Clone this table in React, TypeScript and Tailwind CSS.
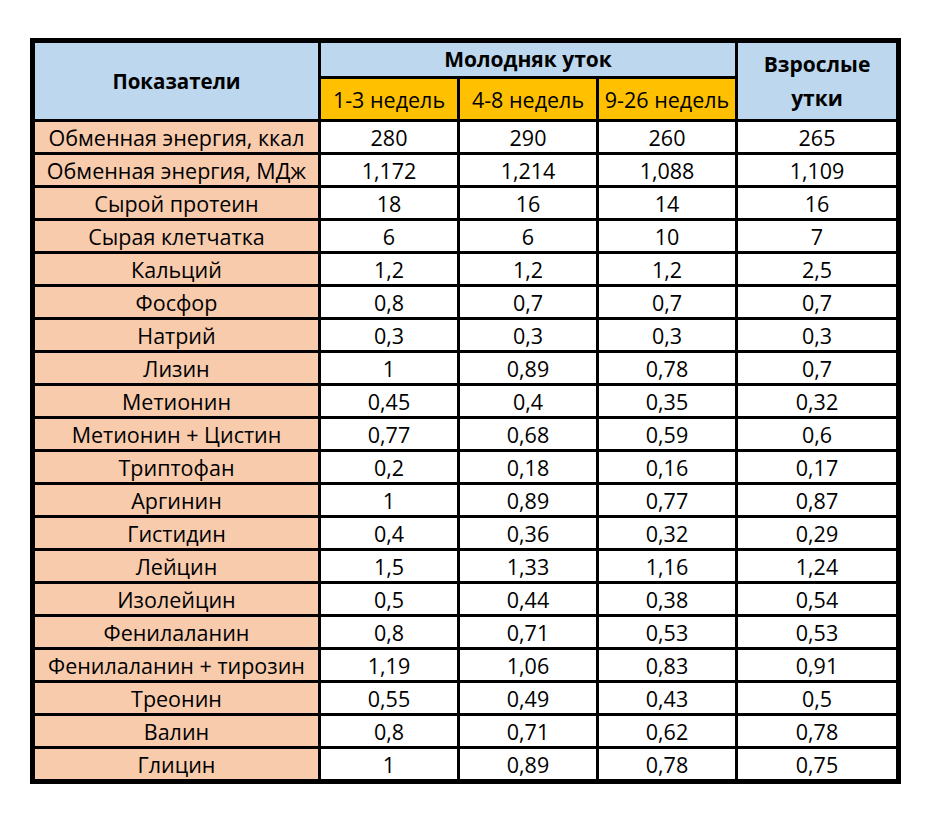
const ROWS: [string, string, string, string, string][] = [
  ['Обменная энергия, ккал', '280', '290', '260', '265'],
  ['Обменная энергия, МДж', '1,172', '1,214', '1,088', '1,109'],
  ['Сырой протеин', '18', '16', '14', '16'],
  ['Сырая клетчатка', '6', '6', '10', '7'],
  ['Кальций', '1,2', '1,2', '1,2', '2,5'],
  ['Фосфор', '0,8', '0,7', '0,7', '0,7'],
  ['Натрий', '0,3', '0,3', '0,3', '0,3'],
  ['Лизин', '1', '0,89', '0,78', '0,7'],
  ['Метионин', '0,45', '0,4', '0,35', '0,32'],
  ['Метионин + Цистин', '0,77', '0,68', '0,59', '0,6'],
  ['Триптофан', '0,2', '0,18', '0,16', '0,17'],
  ['Аргинин', '1', '0,89', '0,77', '0,87'],
  ['Гистидин', '0,4', '0,36', '0,32', '0,29'],
  ['Лейцин', '1,5', '1,33', '1,16', '1,24'],
  ['Изолейцин', '0,5', '0,44', '0,38', '0,54'],
  ['Фенилаланин', '0,8', '0,71', '0,53', '0,53'],
  ['Фенилаланин + тирозин', '1,19', '1,06', '0,83', '0,91'],
  ['Треонин', '0,55', '0,49', '0,43', '0,5'],
  ['Валин', '0,8', '0,71', '0,62', '0,78'],
  ['Глицин', '1', '0,89', '0,78', '0,75'],
];

const cell = 'flex items-center justify-center text-center';

export default function App() {
  return (
    <div
      className="w-[940px] h-[814px] bg-white pt-[38px] pl-[30px] text-[21.5px] text-black"
      style={{ fontFamily: '"Open Sans", "Noto Sans", sans-serif' }}
    >
      <div className="grid w-fit grid-cols-[283px_136px_136px_136px_158px] grid-rows-[33px_40px_repeat(20,30px)] gap-[3px] border-[5px] border-black bg-black leading-none">
        {/* шапка */}
        <div className={`${cell} row-span-2 bg-[#bdd7ee] text-[20.5px] font-bold`}>Показатели</div>
        <div className={`${cell} col-span-3 bg-[#bdd7ee] text-[21px] font-bold`}>Молодняк уток</div>
        <div className={`${cell} row-span-2 bg-[#bdd7ee] text-[21px] font-bold leading-[34px]`}>
          Взрослые
          <br />
          утки
        </div>
        <div className={`${cell} bg-[#ffc000] pt-[2px]`}>1-3 недель</div>
        <div className={`${cell} bg-[#ffc000] pt-[2px]`}>4-8 недель</div>
        <div className={`${cell} bg-[#ffc000] pt-[2px]`}>9-26 недель</div>

        {/* данные */}
        {ROWS.map((row) =>
          row.map((value, i) => (
            <div
              key={row[0] + i}
              className={`${cell} pt-[2px] ${i === 0 ? 'bg-[#f8cbad]' : 'bg-white'}`}
            >
              {value}
            </div>
          ))
        )}
      </div>
    </div>
  );
}
